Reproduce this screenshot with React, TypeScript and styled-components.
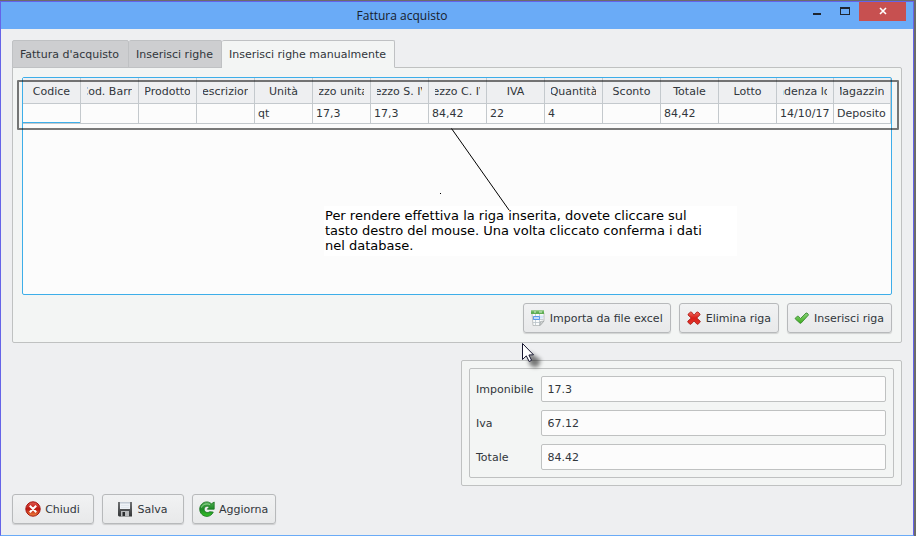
import React from "react";
import styled, { createGlobalStyle } from "styled-components";

const GlobalStyle = createGlobalStyle`
  *, *::before, *::after { box-sizing: border-box; }
  body {
    margin: 0;
    background: #6b6b6b;
    color: #31363b;
    font-family: "DejaVu Sans", Verdana, sans-serif;
    font-size: 11px;
    line-height: 14px;
  }
  button, input { font: inherit; color: inherit; }
`;

const Desktop = styled.div`
  min-height: 100vh;
  display: flex;
  padding: 1px 2px 0 0;
  background: #6b6b6b;
`;

const Window = styled.div`
  position: relative;
  flex: 1;
  min-width: 0;
  display: flex;
  flex-direction: column;
  border: 1px solid #6563e8;
  border-bottom-color: #6aabf7;
  background: #eeeff1;
`;

const TitleBar = styled.header`
  display: flex;
  height: 27px;
  padding-right: 7px;
  background: #6aabf7;
`;

const Title = styled.h1`
  flex: 1;
  margin: 0;
  text-align: center;
  font: 400 12px/27px "Open Sans", "Noto Sans", sans-serif;
  color: #17202c;
`;

const WindowControls = styled.div`
  display: flex;
  align-items: flex-start;
`;

const WindowButton = styled.button<{ $close?: boolean }>`
  display: flex;
  align-items: center;
  justify-content: center;
  width: ${(p) => (p.$close ? 47 : 28)}px;
  height: 19px;
  padding: 0 0 1px;
  border: 0;
  background: ${(p) => (p.$close ? "#c75050" : "transparent")};
`;

const Content = styled.main`
  flex: 1;
  display: flex;
  flex-direction: column;
  padding: 11px;
`;

const TabList = styled.div`
  display: flex;
`;

const Tab = styled.button<{ $active?: boolean }>`
  height: 28px;
  margin-bottom: -1px;
  padding: 1px 8px 0 7px;
  border: 1px solid #bfc1c3;
  border-left-width: 0;
  border-bottom-color: ${(p) => (p.$active ? "#f3f5f4" : "#bfc1c3")};
  border-radius: 2px 2px 0 0;
  background: ${(p) => (p.$active ? "#f3f5f4" : "#cdced0")};
  z-index: ${(p) => (p.$active ? 1 : 0)};
  white-space: nowrap;

  &:first-child {
    padding-right: 9px;
    border-left-width: 1px;
  }
`;

const Panel = styled.section`
  flex: 1;
  display: flex;
  flex-direction: column;
  gap: 8px;
  padding: 9px;
  border: 1px solid #bfc1c1;
  border-radius: 0 2px 2px 2px;
  background: #f3f5f4;
`;

const TableFrame = styled.div`
  position: relative;
  flex: 1;
  border: 1px solid #3daee9;
  border-radius: 2px;
  background: #fcfcfc;
`;

const Grid = styled.table`
  width: 100%;
  table-layout: fixed;
  border-collapse: separate;
  border-spacing: 0;
`;

const HeadCell = styled.th`
  height: 26px;
  padding: 2px 6px 0;
  border: solid #c4c9cd;
  border-width: 0 1px 1px 0;
  background: #eeeff1;
  font-weight: 400;

  &:nth-last-child(-n + 2) {
    width: 57px;
  }
`;

const HeadLabel = styled.span`
  display: flex;
  justify-content: center;
  overflow: hidden;
  white-space: nowrap;
`;

const Cell = styled.td<{ $current?: boolean }>`
  height: 20px;
  padding: 0 0 0 3px;
  border: solid #c4c9cd;
  border-width: 0 1px 1px 0;
  box-shadow: ${(p) => (p.$current ? "inset 0 -1px #3daee9" : "none")};
  overflow: hidden;
  white-space: nowrap;
`;

const RowOutline = styled.div`
  position: absolute;
  top: 2px;
  left: -6px;
  right: -8px;
  height: 50px;
  border: 2px solid rgba(0, 0, 0, 0.52);
  border-radius: 1px;
  pointer-events: none;
`;

const Pointer = styled.svg`
  position: absolute;
  top: 50px;
  left: 410px;
  pointer-events: none;
`;

const Note = styled.p`
  position: absolute;
  top: 128px;
  left: 301px;
  width: 413px;
  margin: 0;
  padding: 2px 28px 3px 1px;
  background: #fff;
  color: #000;
  font-size: 13px;
  line-height: 15px;
`;

const Actions = styled.div<{ $end?: boolean }>`
  display: flex;
  justify-content: ${(p) => (p.$end ? "flex-end" : "flex-start")};
  gap: 8px;
`;

const ActionButton = styled.button`
  display: flex;
  align-items: center;
  justify-content: center;
  gap: 4px;
  min-width: 82px;
  height: 30px;
  padding: 0 7px 0 6px;
  border: 1px solid #b7b9bb;
  border-radius: 3px;
  background: linear-gradient(#f1f2f3, #e8e9ea);
  box-shadow: 0 1px 1px rgba(0, 0, 0, 0.14);
  white-space: nowrap;

  svg { flex: none; }
`;

const ButtonLabel = styled.span`
  padding-top: 2px;
`;

const Summary = styled.div`
  display: grid;
  grid-template-columns: 1fr 1fr;
  gap: 8px;
  margin: 17px 0 8px;
`;

const SummaryPanel = styled.section`
  grid-column: 2;
  padding: 7px;
  border: 1px solid #bfc1c1;
  border-radius: 2px;
  background: #f3f5f4;
`;

const Totals = styled.form`
  display: grid;
  grid-template-columns: auto 1fr;
  align-items: center;
  gap: 8px 7px;
  padding: 7px 7px 7px 6px;
  border: 1px solid #bfc1c1;
  border-radius: 2px;
`;

const FieldLabel = styled.label`
  padding-top: 2px;
`;

const Field = styled.input`
  width: 100%;
  min-width: 0;
  height: 26px;
  padding: 0 6px;
  border: 1px solid #bfc1c1;
  border-radius: 2px;
  background: #fcfcfc;
`;

const MouseCursor = styled.svg`
  position: absolute;
  top: 340px;
  left: 520px;
  pointer-events: none;
`;

const SheetIcon = () => (
  <svg width="16" height="16" viewBox="0 0 16 16" aria-hidden="true">
    <path d="M2 3h12v8l-4 4.500H3z" fill="#fafbfb" stroke="#a9adad" strokeWidth=".7" />
    <path d="M1 .5h13v3.500H1z" fill="#5fae55" />
    <path d="M1 .5h13v1H1z" fill="#8aca7f" />
    <path d="M4 2h2M9 2h3" stroke="#d9f0d4" />
    <path d="M2.500 6.500h11M2.500 9.500h11M3 12.500h8M5.500 4v11M9.500 4v11" stroke="#b9c3c9" strokeWidth=".8" />
    <path d="M3.500 6.500h6v3h-6z" fill="#c3dcfb" stroke="#5b9aec" />
    <path d="M10 5.500h3v3h-3z" fill="#d5e5f9" />
    <path d="M10 15.500l.5-4 3.500-.5z" fill="#d2d5d5" stroke="#9b9f9f" strokeWidth=".6" />
  </svg>
);

const CrossIcon = () => (
  <svg width="16" height="16" viewBox="0 0 16 16" aria-hidden="true">
    <defs>
      <linearGradient id="cross" x1="0" y1="0" x2="0" y2="1">
        <stop offset="0" stopColor="#f2695c" />
        <stop offset=".5" stopColor="#d91e18" />
        <stop offset="1" stopColor="#e3352c" />
      </linearGradient>
    </defs>
    <path
      d="M2 4.300 4.500 2 5.500 2 8 5.200 10.800 2h1.200l2 2v.8L10.800 8l3.400 3.200v.9L12 14.200h-1L8 11l-3 3.200H4l-2.200-2v-1L5.200 8 2 5z"
      fill="url(#cross)"
      stroke="#a81712"
      strokeWidth=".8"
      strokeLinejoin="round"
    />
  </svg>
);

const CheckIcon = () => (
  <svg width="16" height="16" viewBox="0 0 16 16" aria-hidden="true">
    <defs>
      <linearGradient id="check" x1="0" y1="0" x2="0" y2="1">
        <stop offset="0" stopColor="#8bd27c" />
        <stop offset="1" stopColor="#3fae1c" />
      </linearGradient>
    </defs>
    <path
      d="M1.300 8.200 3.300 6.200h1L6.500 8.500 12 3h1l1.300 1.300v.9L7 13.200H6L1.300 9z"
      fill="url(#check)"
      stroke="#3c8b35"
      strokeWidth=".9"
      strokeLinejoin="round"
    />
  </svg>
);

const StopIcon = () => (
  <svg width="16" height="16" viewBox="0 0 16 16" aria-hidden="true">
    <defs>
      <linearGradient id="stop" x1="0" y1="0" x2="0" y2="1">
        <stop offset="0" stopColor="#e05a50" />
        <stop offset=".5" stopColor="#bb1610" />
        <stop offset="1" stopColor="#f0883e" />
      </linearGradient>
    </defs>
    <circle cx="8" cy="8" r="7.200" fill="url(#stop)" stroke="#a5140f" strokeWidth="1" />
    <path d="M5.500 5.500l5 5M10.500 5.500l-5 5" stroke="#fff" strokeWidth="2" strokeLinecap="square" />
  </svg>
);

const FloppyIcon = () => (
  <svg width="16" height="16" viewBox="0 0 16 16" aria-hidden="true">
    <defs>
      <linearGradient id="floppy" x1="0" y1="0" x2="0" y2="1">
        <stop offset="0" stopColor="#6f7173" />
        <stop offset="1" stopColor="#343638" />
      </linearGradient>
    </defs>
    <path d="M1 1h14v14.500H2L1 14.500z" fill="url(#floppy)" />
    <path d="M3 1h10v7H3z" fill="#eef2f7" />
    <path d="M3 1h10v1.500H3z" fill="#c3cbd5" />
    <path d="M4 4.500h8M4 6.500h8" stroke="#dbe2ea" strokeWidth=".7" />
    <path d="M4 10h8v5.500H4z" fill="#b9bbbd" />
    <path d="M5.500 11H8v4H5.500z" fill="#2b2d2f" />
  </svg>
);

const RefreshIcon = () => (
  <svg width="16" height="16" viewBox="0 0 16 16" aria-hidden="true">
    <defs>
      <linearGradient id="refresh" x1="0" y1="0" x2="0" y2="1">
        <stop offset="0" stopColor="#4fae52" />
        <stop offset=".5" stopColor="#1d8a26" />
        <stop offset="1" stopColor="#35c226" />
      </linearGradient>
    </defs>
    <path
      d="M12.400 2.800 15.200 1v7.200H8.300l2.100-2.300C8 4.300 5.200 5.600 5.200 8.300c0 2.900 3.300 4.200 5.500 2.400l3.600.4C12.800 14 10.700 15.400 8 15.400 3.900 15.400.7 12.200.7 8.200S3.900.9 7.800.9c1.900 0 3.300.7 4.600 1.900z"
      fill="url(#refresh)"
      stroke="#1b7422"
      strokeWidth=".8"
      strokeLinejoin="round"
    />
    <path d="M2.500 6.500C3.300 3.500 7.500 2 10.800 3.600" fill="none" stroke="#a5dba4" strokeWidth=".9" />
  </svg>
);

const columns: { label: string; value: string }[] = [
  { label: "Codice", value: "" },
  { label: "Cod. Barre", value: "" },
  { label: "Prodotto", value: "" },
  { label: "Descrizione", value: "" },
  { label: "Unità", value: "qt" },
  { label: "Prezzo unitario", value: "17,3" },
  { label: "Prezzo S. IVA", value: "17,3" },
  { label: "Prezzo C. IVA", value: "84,42" },
  { label: "IVA", value: "22" },
  { label: "Quantità", value: "4" },
  { label: "Sconto", value: "" },
  { label: "Totale", value: "84,42" },
  { label: "Lotto", value: "" },
  { label: "Scadenza lotto", value: "14/10/17" },
  { label: "Magazzino", value: "Deposito" },
];

const totals = [
  { id: "imponibile", label: "Imponibile", value: "17.3" },
  { id: "iva", label: "Iva", value: "67.12" },
  { id: "totale", label: "Totale", value: "84.42" },
];

export default function App() {
  return (
    <Desktop>
      <GlobalStyle />
      <Window>
        <TitleBar>
          <Title>Fattura acquisto</Title>
          <WindowControls>
            <WindowButton type="button" aria-label="Riduci a icona">
              <svg width="8" height="10" viewBox="0 0 8 10">
                <path d="M0 7h8v2H0z" fill="#1e2530" />
              </svg>
            </WindowButton>
            <WindowButton type="button" aria-label="Ingrandisci">
              <svg width="10" height="8" viewBox="0 0 10 8">
                <path d="M0 0h10v8H0zM1 2v5h8V2z" fill="#1e2530" fillRule="evenodd" />
              </svg>
            </WindowButton>
            <WindowButton type="button" $close aria-label="Chiudi finestra">
              <svg width="8" height="8" viewBox="0 0 8 8">
                <path d="M1 1l6 6M7 1L1 7" stroke="#fff" strokeWidth="1.600" />
              </svg>
            </WindowButton>
          </WindowControls>
        </TitleBar>

        <Content>
          <TabList role="tablist">
            <Tab type="button" role="tab" aria-selected="false">Fattura d'acquisto</Tab>
            <Tab type="button" role="tab" aria-selected="false">Inserisci righe</Tab>
            <Tab type="button" role="tab" aria-selected="true" $active>
              Inserisci righe manualmente
            </Tab>
          </TabList>

          <Panel role="tabpanel">
            <TableFrame>
              <Grid>
                <thead>
                  <tr>
                    {columns.map((c) => (
                      <HeadCell key={c.label} scope="col">
                        <HeadLabel>{c.label}</HeadLabel>
                      </HeadCell>
                    ))}
                  </tr>
                </thead>
                <tbody>
                  <tr>
                    {columns.map((c, i) => (
                      <Cell key={c.label} $current={i === 0}>{c.value}</Cell>
                    ))}
                  </tr>
                </tbody>
              </Grid>
              <RowOutline />
              <Note>
                Per rendere effettiva la riga inserita, dovete cliccare sul tasto destro del
                mouse. Una volta cliccato conferma i dati nel database.
              </Note>
              <Pointer width="80" height="86" viewBox="0 0 80 86" aria-hidden="true">
                <path d="M18.500 .5L76 82" stroke="#000" fill="none" />
                <path d="M7 65h1v1H7z" fill="#000" />
              </Pointer>
            </TableFrame>
            <Actions $end>
              <ActionButton type="button">
                <SheetIcon />
                <ButtonLabel>Importa da file excel</ButtonLabel>
              </ActionButton>
              <ActionButton type="button">
                <CrossIcon />
                <ButtonLabel>Elimina riga</ButtonLabel>
              </ActionButton>
              <ActionButton type="button">
                <CheckIcon />
                <ButtonLabel>Inserisci riga</ButtonLabel>
              </ActionButton>
            </Actions>
          </Panel>

          <Summary>
            <SummaryPanel>
              <Totals>
                {totals.map((t) => (
                  <React.Fragment key={t.id}>
                    <FieldLabel htmlFor={t.id}>{t.label}</FieldLabel>
                    <Field id={t.id} type="text" defaultValue={t.value} />
                  </React.Fragment>
                ))}
              </Totals>
            </SummaryPanel>
          </Summary>

          <Actions>
            <ActionButton type="button">
              <StopIcon />
              <ButtonLabel>Chiudi</ButtonLabel>
            </ActionButton>
            <ActionButton type="button">
              <FloppyIcon />
              <ButtonLabel>Salva</ButtonLabel>
            </ActionButton>
            <ActionButton type="button">
              <RefreshIcon />
              <ButtonLabel>Aggiorna</ButtonLabel>
            </ActionButton>
          </Actions>
        </Content>

        <MouseCursor width="32" height="34" viewBox="0 0 32 34" aria-hidden="true">
          <defs>
            <filter id="soft" x="-50%" y="-50%" width="200%" height="200%">
              <feGaussianBlur stdDeviation="2" />
            </filter>
          </defs>
          <path d="M8 10v12l4 3h5l3-7z" fill="#000" opacity=".5" filter="url(#soft)" />
          <path
            d="M1.500 1.500v16l3.800-3.600 2.900 5.600 2.400-1.200-2.700-5.300 4.600-.2z"
            fill="#fff"
            stroke="#15152e"
          />
        </MouseCursor>
      </Window>
    </Desktop>
  );
}
